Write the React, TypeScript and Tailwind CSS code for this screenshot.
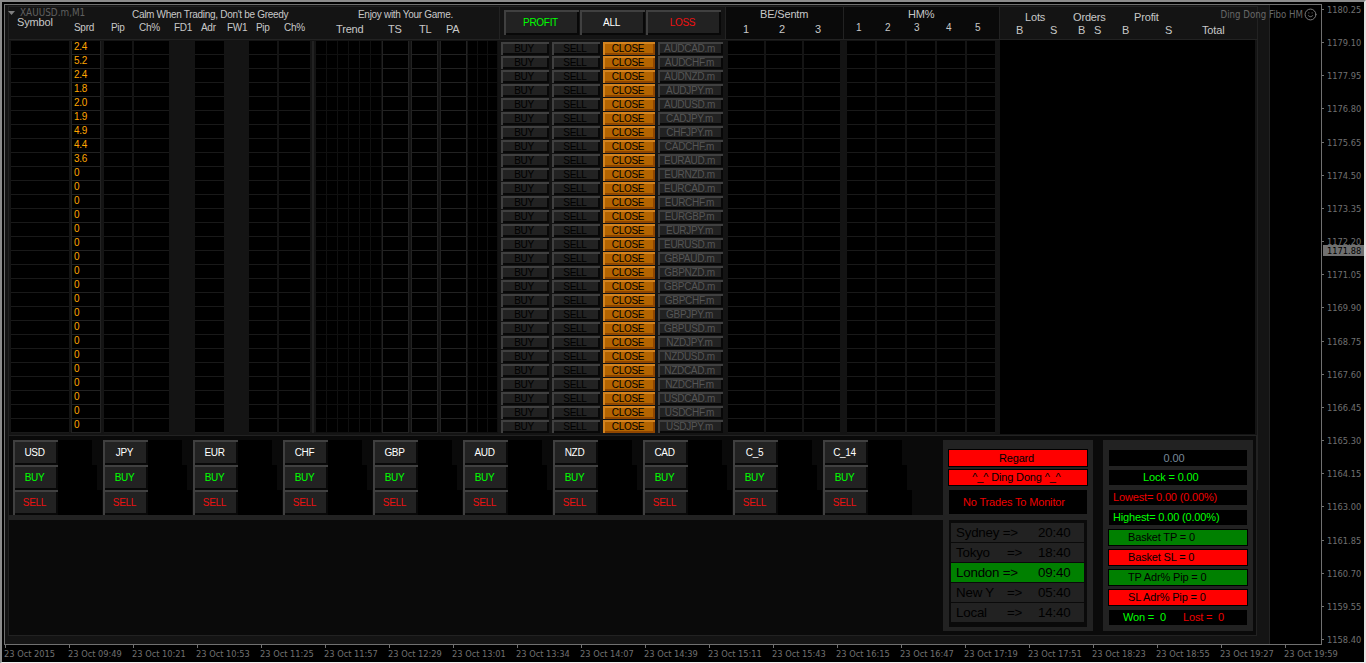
import React from "react";
import { Smile } from "lucide-react";

const pairs = [
  "AUDCAD", "AUDCHF", "AUDNZD", "AUDJPY", "AUDUSD", "CADJPY", "CHFJPY", "CADCHF", "EURAUD", "EURNZD",
  "EURCAD", "EURCHF", "EURGBP", "EURJPY", "EURUSD", "GBPAUD", "GBPNZD", "GBPCAD", "GBPCHF", "GBPJPY",
  "GBPUSD", "NZDJPY", "NZDUSD", "NZDCAD", "NZDCHF", "USDCAD", "USDCHF", "USDJPY",
];
const spreads = ["2.4", "5.2", "2.4", "1.8", "2.0", "1.9", "4.9", "4.4", "3.6"];
const currencies = ["USD", "JPY", "EUR", "CHF", "GBP", "AUD", "NZD", "CAD", "C_5", "C_14"];
const prices = Array.from({ length: 20 }, (_, i) => (1180.25 - i * 1.15).toFixed(2));
const times = [
  "2015", "09:49", "10:21", "10:53", "11:25", "11:57", "12:29", "13:01", "13:34", "14:07", "14:39",
  "15:11", "15:43", "16:15", "16:47", "17:19", "17:51", "18:23", "18:55", "19:27", "19:59",
];
const sessions = [
  ["Sydney =>", "20:40"],
  ["Tokyo", "18:40"],
  ["London =>", "09:40"],
  ["New Y", "05:40"],
  ["Local", "14:40"],
];

const raised = "flex items-center justify-center pr-[2px] bg-[#222222] shadow-[inset_0_2px_#404040,inset_2px_0_#404040,inset_0_-2px_#080808,inset_-2px_0_#080808]";
const cell = "h-[14px] border-b border-[#191919] bg-black";
const brightCell = "h-[14px] border-b border-x border-[#222222] bg-black";
const label = "text-[11px] tracking-[-0.16px]";
const axis = "font-['DejaVu_Sans_Condensed','DejaVu_Sans',sans-serif] [font-stretch:condensed] tracking-normal";

function Lattice({ count, width }: { count: number; width: string }) {
  return (
    <div className="flex">
      {Array.from({ length: count }, (_, i) => (
        <div key={i} className={`h-[14px] border-r border-b border-[#101010] bg-black ${width}`} />
      ))}
    </div>
  );
}

function Row({ pair, spread }: { pair: string; spread: string }) {
  return (
    <div className="flex h-[14px] pl-[2px]">
      <div className={`${cell} w-[58px]`} />
      <div className={`${brightCell} ml-[2px] w-[30px] pl-[2px] leading-[12px] text-[#ffa500]`}>{spread}</div>
      <div className={`${cell} ml-[3px] w-[28px]`} />
      <div className={`${cell} ml-[2px] w-[35px]`} />
      <div className={`${cell} ml-[26px] w-[29px]`} />
      <div className={`${cell} ml-[25px] w-[28px]`} />
      <div className={`${cell} ml-[2px] w-[31px]`} />
      <div className="ml-[2px] h-[14px] w-[2px] bg-[#222222]" />
      <div className="ml-[2px]"><Lattice count={6} width="w-[11px]" /></div>
      <div className={`${brightCell} w-[27px]`} />
      <div className={`${brightCell} ml-[2px] w-[27px]`} />
      <div className={`${brightCell} ml-[2px] w-[27px]`} />
      <div className="ml-px"><Lattice count={3} width="w-[10px]" /></div>
      <div className={`${raised} mt-px ml-[3px] h-[13px] w-[48px] text-black`}>BUY</div>
      <div className={`${raised} mt-px ml-[3px] h-[13px] w-[48px] text-black`}>SELL</div>
      <div className="mt-px ml-[3px] flex h-[13px] w-[52px] items-center justify-center bg-[#b46400] pr-[2px] text-black shadow-[inset_0_2px_#d48420,inset_2px_0_#d48420,inset_0_-2px_#8f4600,inset_-2px_0_#8f4600]">CLOSE</div>
      <div className={`${raised} mt-px ml-[3px] h-[13px] w-[65px] text-[#555555]`}>{pair}.m</div>
      <div className={`${cell} ml-[5px] w-[36px]`} />
      <div className={`${cell} ml-[2px] w-[36px]`} />
      <div className={`${cell} ml-[2px] w-[36px]`} />
      <div className={`${cell} ml-[7px] w-[28px]`} />
      {[0, 1, 2, 3].map((i) => (
        <div key={i} className={`${cell} ml-[2px] w-[28px]`} />
      ))}
    </div>
  );
}

function Header() {
  return (
    <div className="flex h-[33px] border-b border-[#222222] text-[#c8c8c8]">
      <div className="flex w-[490px]">
        <div className={`w-[65px] pt-[9px] pl-[8px] leading-[13px] ${label}`}>Symbol</div>
        <div className="flex flex-col">
          <div className="flex pt-[2px] pl-[58px] leading-[12px]">
            <span className="w-[226px]">Calm When Trading, Don't be Greedy</span>
            <span>Enjoy with Your Game.</span>
          </div>
          <div className="flex leading-[12px]">
            <span className="mt-px w-[37px]">Sprd</span>
            <span className="mt-px w-[28px]">Pip</span>
            <span className="mt-px w-[35px]">Ch%</span>
            <span className="mt-px w-[27px]">FD1</span>
            <span className="mt-px w-[26px]">Adr</span>
            <span className="mt-px w-[29px]">FW1</span>
            <span className="mt-px w-[28px]">Pip</span>
            <span className="mt-px w-[52px]">Ch%</span>
            <div className={`mt-[2px] flex ${label}`}>
              <span className="w-[52px]">Trend</span>
              <span className="w-[31px]">TS</span>
              <span className="w-[27px]">TL</span>
              <span>PA</span>
            </div>
          </div>
        </div>
      </div>
      <div className="flex w-[226px] gap-px border-l border-[#222222] pt-[3px] pl-[4px]">
        <div className={`${raised} h-[25px] w-[75px] text-[#00ff00]`}>PROFIT</div>
        <div className={`${raised} h-[25px] w-[65px] text-white`}>ALL</div>
        <div className={`${raised} h-[25px] w-[75px] text-[#ee1111]`}>LOSS</div>
      </div>
      <div className={`w-[118px] border-l border-[#222222] bg-[#0a0a0a] ${label}`}>
        <div className="pt-px pl-[34px] leading-[13px]">BE/Sentm</div>
        <div className="flex pt-[2px] pl-[17px] leading-[13px]">
          <span className="w-[36px]">1</span>
          <span className="w-[36px]">2</span>
          <span>3</span>
        </div>
      </div>
      <div className="w-[156px] border-l border-[#222222] bg-[#0a0a0a]">
        <div className={`pt-px pl-[64px] leading-[13px] ${label}`}>HM%</div>
        <div className="flex pt-px pl-[12px] leading-[12px]">
          <span className="w-[29px]">1</span>
          <span className="w-[29px]">2</span>
          <span className="w-[32px]">3</span>
          <span className="w-[29px]">4</span>
          <span>5</span>
        </div>
      </div>
      <div className={`w-[258px] border-l border-[#222222] leading-[13px] ${label}`}>
        <div className="flex pt-[4px] pl-[25px]">
          <span className="w-[48px]">Lots</span>
          <span className="w-[61px]">Orders</span>
          <span>Profit</span>
        </div>
        <div className="flex pl-[16px]">
          <span className="w-[34px]">B</span>
          <span className="w-[28px]">S</span>
          <span className="w-[16px]">B</span>
          <span className="w-[28px]">S</span>
          <span className="w-[43px]">B</span>
          <span className="w-[37px]">S</span>
          <span>Total</span>
        </div>
      </div>
    </div>
  );
}

function CurrencyGroup({ name }: { name: string }) {
  return (
    <div className="w-[90px]">
      <div className="flex h-[25px] w-[79px] bg-black">
        <div className={`${raised} w-[45px] text-white`}>{name}</div>
      </div>
      <div className="flex h-[25px] w-[84px] bg-black">
        <div className={`${raised} w-[45px] text-[#00ff00]`}>BUY</div>
      </div>
      <div className="flex h-[25px] w-[89px] bg-black">
        <div className={`${raised} w-[45px] text-[#ee1111]`}>SELL</div>
      </div>
    </div>
  );
}

function SessionPanel() {
  return (
    <div className={`flex h-[191px] w-[150px] flex-col items-center bg-[#222222] pt-[9px] ${label}`}>
      <div className="flex h-[18px] w-[140px] items-center justify-center border border-black bg-[#ff0000] pr-[3px] text-black">Regard</div>
      <div className="mt-[2px] flex h-[17px] w-[140px] items-center justify-center border border-black bg-[#ff0000] pr-[3px] text-black">^_^ Ding Dong ^_^</div>
      <div className="mt-[4px] flex h-[24px] w-[138px] items-center bg-black pl-[14px] text-[#ee0000]">No Trades To Monitor</div>
      <div className="mt-[6px] flex h-[107px] w-[138px] flex-col gap-px bg-[#0a0a0a] pt-[3px] pl-[2px] text-[13.33px] tracking-[-0.2px] text-black">
        {sessions.map(([city, time]) => (
          <div key={city} className={`flex h-[19px] w-[133px] items-center pl-[5px] leading-[19px] ${city.startsWith("London") ? "bg-[#008000]" : "bg-[#222222]"}`}>
            {city.includes("=>") ? (
              <span className="w-[82px]">{city}</span>
            ) : (
              <>
                <span className="w-[51px]">{city}</span>
                <span className="w-[31px]">=&gt;</span>
              </>
            )}
            <span>{time}</span>
          </div>
        ))}
      </div>
    </div>
  );
}

function BasketPanel() {
  const dark = "flex h-[15px] w-[138px] items-center bg-black";
  const framed = "flex h-[17px] w-[140px] items-center border border-black pl-[19px] text-black";
  return (
    <div className={`ml-[10px] flex h-[191px] w-[150px] flex-col items-center bg-[#222222] pt-[10px] ${label}`}>
      <div className="flex h-[16px] w-[138px] items-center justify-center bg-black pr-[8px] text-[#778899]">0.00</div>
      <div className={`${dark} mt-[4px] pl-[34px] text-[#00ff00]`}>Lock = 0.00</div>
      <div className={`${dark} mt-[5px] pl-[4px] text-[#ee0000]`}>Lowest= 0.00 (0.00%)</div>
      <div className={`${dark} mt-[5px] pl-[4px] text-[#00ff00]`}>Highest= 0.00 (0.00%)</div>
      <div className={`${framed} mt-[4px] bg-[#008000]`}>Basket TP = 0</div>
      <div className={`${framed} mt-[3px] bg-[#ff0000]`}>Basket SL = 0</div>
      <div className={`${framed} mt-[3px] bg-[#008000]`}>TP Adr% Pip = 0</div>
      <div className={`${framed} mt-[3px] bg-[#ff0000]`}>SL Adr% Pip = 0</div>
      <div className={`${dark} mt-[4px] pl-[14px] whitespace-pre`}>
        <span className="w-[60px] text-[#00ff00]">{"Won =  0"}</span>
        <span className="text-[#ee0000]">{"Lost =  0"}</span>
      </div>
    </div>
  );
}

export default function App() {
  return (
    <div className="relative flex h-[663px] w-[1366px] flex-col overflow-hidden border-t-2 border-r-2 border-b border-l-2 border-t-[#8c8c8c] border-r-[#e3e3e3] border-b-[#f0f0f0] border-l-[#8c8c8c] bg-black pt-[2px] pl-[2px] font-['Liberation_Sans',Arial,sans-serif] text-[10px] tracking-[-0.3px] whitespace-nowrap">
      <div className="flex h-[641px]">
        <div className="h-[641px] w-[1318px] shrink-0 border border-[#707070]">
          <div className="h-[639px] w-[1265px] border-r border-[#222222] bg-[#141414] pt-px pl-[3px]">
            <div className="h-[429px] w-[1250px] border-x border-t border-[#222222]">
              <Header />
              <div className="flex h-[395px]">
                <div className="w-[990px] pt-px">
                  {pairs.map((p, i) => (
                    <Row key={p} pair={p} spread={spreads[i] ?? "0"} />
                  ))}
                </div>
                <div className="ml-px h-[394px] w-[255px] bg-black" />
              </div>
            </div>
            <div className="flex">
              <div className="flex h-[201px] w-[1249px] border border-[#222222] bg-[#0a0a0a]">
                <div className="w-[934px]">
                  <div className="flex h-[79px] pt-[4px] pl-[4px]">
                    {currencies.map((c) => (
                      <CurrencyGroup key={c} name={c} />
                    ))}
                  </div>
                  <div className="h-[5px] bg-[#222222]" />
                </div>
                <div className="flex pt-[4px]">
                  <SessionPanel />
                  <BasketPanel />
                </div>
              </div>
              <div className="h-[55px] w-px bg-[#222222]" />
            </div>
          </div>
        </div>
        <div className={`flex h-[641px] flex-col justify-between text-[9.2px] leading-[11px] text-[#707070] ${axis}`}>
          {prices.map((p) => (
            <div key={p} className="flex items-center">
              <span className="h-px w-[2px] bg-[#707070]" />
              <span className="ml-[3px]">{p}</span>
            </div>
          ))}
        </div>
      </div>
      <div className={`flex pl-px text-[9.2px] leading-[11px] text-[#707070] ${axis}`}>
        {times.map((t) => (
          <div key={t} className="w-[64px] shrink-0">
            <div className="h-[3px] w-px bg-[#707070]" />
            <div className="-ml-px">23 Oct {t}</div>
          </div>
        ))}
      </div>
      <div className={`absolute top-[5px] left-[6px] flex items-center text-[9.9px] leading-[12px] text-[#606060] ${axis}`}>
        <svg className="h-[4px] w-[7px]" viewBox="0 0 7 4"><path d="M0 0h7L3.5 4z" fill="#808080" /></svg>
        <span className="ml-[5px]">XAUUSD.m,M1</span>
      </div>
      <div className={`absolute top-[6px] right-[47px] flex items-center text-[9.6px] leading-[12px] text-[#686868] ${axis}`}>
        <span>Ding Dong Fibo HM</span>
        <Smile className="ml-px h-[13px] w-[13px] text-[#808080]" strokeWidth={1.8} />
      </div>
      <div className={`absolute top-[243px] right-0 flex h-[11px] w-[41px] items-center bg-[#707070] pl-[4px] text-[9.2px] text-black ${axis}`}>1171.88</div>
    </div>
  );
}
